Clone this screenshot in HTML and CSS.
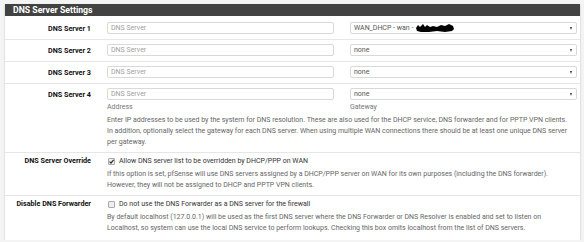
FILE: index.html
```html
<!DOCTYPE html>
<html lang="en">
<head>
    <meta charset="UTF-8">
    <title>DNS Server Settings</title>
    <link rel="stylesheet" href="styles.css">
</head>
<body>
    <div class="panel">
        <div class="panel-heading">DNS Server Settings</div>
        <div class="panel-body">
            <div class="row">
                <label class="row-label">DNS Server 1</label>
                <div class="row-content">
                    <div class="pair">
                        <input class="field" type="text" placeholder="DNS Server">
                        <div class="select">
                            <span>WAN_DHCP - wan - </span>
                            <svg class="redact" width="40" height="10" viewBox="0 0 40 10">
                                <path d="M1 5 L3 2 L5 4 L8 1 L10 4 L12 2 L15 4 L18 3 L22 4 L26 2 L30 3 L34 1 L38 3 L39 6 L37 8 L30 9 L22 8 L14 9 L6 9 L2 8 Z" fill="#000"/>
                            </svg>
                            <i class="caret"></i>
                        </div>
                    </div>
                </div>
            </div>
            <div class="row">
                <label class="row-label">DNS Server 2</label>
                <div class="row-content">
                    <div class="pair">
                        <input class="field" type="text" placeholder="DNS Server">
                        <div class="select"><span>none</span><i class="caret"></i></div>
                    </div>
                </div>
            </div>
            <div class="row">
                <label class="row-label">DNS Server 3</label>
                <div class="row-content">
                    <div class="pair">
                        <input class="field" type="text" placeholder="DNS Server">
                        <div class="select"><span>none</span><i class="caret"></i></div>
                    </div>
                </div>
            </div>
            <div class="row">
                <label class="row-label">DNS Server 4</label>
                <div class="row-content">
                    <div class="pair">
                        <div class="col">
                            <input class="field" type="text" placeholder="DNS Server">
                            <div class="sub">Address</div>
                        </div>
                        <div class="col">
                            <div class="select"><span>none</span><i class="caret"></i></div>
                            <div class="sub">Gateway</div>
                        </div>
                    </div>
                    <div class="help">Enter IP addresses to be used by the system for DNS resolution. These are also used for the DHCP service, DNS forwarder and for PPTP VPN clients. In addition, optionally select the gateway for each DNS server. When using multiple WAN connections there should be at least one unique DNS server per gateway.</div>
                </div>
            </div>
            <div class="row row-check">
                <label class="row-label">DNS Server Override</label>
                <div class="row-content">
                    <label class="check">
                        <span class="box"><svg width="7" height="7" viewBox="0 0 7 7"><path d="M1.5 3.6 L3 5 L5.6 1.8" fill="none" stroke="#333" stroke-width="1.2"/></svg></span>
                        Allow DNS server list to be overridden by DHCP/PPP on WAN
                    </label>
                    <div class="help">If this option is set, pfSense will use DNS servers assigned by a DHCP/PPP server on WAN for its own purposes (including the DNS forwarder). However, they will not be assigned to DHCP and PPTP VPN clients.</div>
                </div>
            </div>
            <div class="row row-check">
                <label class="row-label">Disable DNS Forwarder</label>
                <div class="row-content">
                    <label class="check">
                        <span class="box"></span>
                        Do not use the DNS Forwarder as a DNS server for the firewall
                    </label>
                    <div class="help">By default localhost (127.0.0.1) will be used as the first DNS server where the DNS Forwarder or DNS Resolver is enabled and set to listen on Localhost, so system can use the local DNS service to perform lookups. Checking this box omits localhost from the list of DNS servers.</div>
                </div>
            </div>
        </div>
    </div>
</body>
</html>
```

FILE: styles.css
```css
body {
    margin: 0;
    padding: 4px 4px 0 5px;
    background-color: #f4f4f4;
    font-family: Roboto, "Liberation Sans", sans-serif;
    font-size: 7px;
    color: #222;
}
.panel {
    background: #fff;
    box-shadow: 0 1px 2px rgba(0, 0, 0, 0.2);
}
.panel-heading {
    background: #424242;
    color: #fff;
    font-weight: bold;
    font-size: 8.7px;
    line-height: 12px;
    height: 12px;
    padding: 0 8px;
}
.panel-body {
    padding-top: 2px;
}
.row {
    display: flex;
    padding: 4px 3px 4px 0;
    border-bottom: 1px solid #e6e6e6;
}
.row:last-child {
    border-bottom: none;
    padding-bottom: 6px;
}
.row-label {
    width: 86px;
    flex: none;
    text-align: right;
    font-weight: bold;
    font-size: 7.2px;
    line-height: 12px;
    padding-top: 1px;
    margin-right: 16px;
    color: #111;
}
.row-content {
    flex: 1;
    min-width: 0;
}
.pair {
    display: flex;
    gap: 16px;
}
.pair > .field,
.pair > .select,
.col {
    flex: 1;
    min-width: 0;
}
.field,
.select {
    box-sizing: border-box;
    display: block;
    width: 100%;
    height: 12px;
    margin: 0;
    border: 1px solid #d9d9d9;
    border-radius: 2px;
    background: #fff;
    font-family: inherit;
    font-size: 7px;
    padding: 0 3px;
    color: #555;
    outline: none;
}
.field::placeholder {
    color: #a0a0a0;
}
.select {
    position: relative;
    display: flex;
    align-items: center;
    line-height: 10px;
    white-space: nowrap;
}
.redact {
    margin-left: 2px;
}
.caret {
    position: absolute;
    right: 4px;
    top: 4px;
    width: 0;
    height: 0;
    border-left: 1.5px solid transparent;
    border-right: 1.5px solid transparent;
    border-top: 3px solid #333;
}
.sub {
    color: #777;
    line-height: 11px;
    margin-top: 2px;
}
.help {
    color: #666;
    line-height: 11px;
    margin-top: 2px;
    padding-right: 8px;
}
.row-check {
    padding-top: 2px;
}
.row-check .row-label {
    padding-top: 0;
}
.check {
    display: flex;
    align-items: center;
    gap: 4px;
    line-height: 12px;
    color: #333;
}
.box {
    box-sizing: border-box;
    width: 7px;
    height: 7px;
    margin-left: 1px;
    border: 1px solid #aaa;
    border-radius: 1px;
    background: #eee;
    display: flex;
    align-items: center;
    justify-content: center;
}
.box svg {
    display: block;
    flex: none;
}
```
